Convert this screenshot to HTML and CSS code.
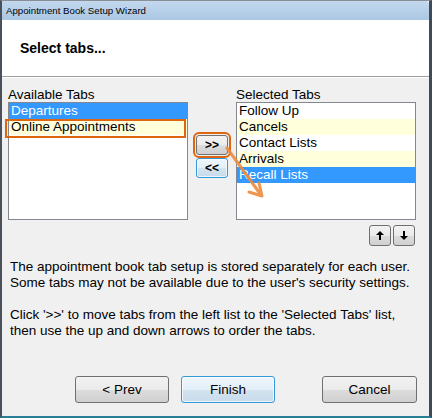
FILE: index.html
```html
<!DOCTYPE html>
<html>
<head>
<meta charset="utf-8">
<link rel="stylesheet" href="styles.css">
</head>
<body>
<div class="window">
  <div class="titlebar">Appointment Book Setup Wizard</div>
  <div class="header"><span class="heading">Select tabs...</span></div>
  <div class="body">
    <div class="lists">
      <div class="col">
        <div class="label">Available Tabs</div>
        <div class="listbox">
          <div class="item selected">Departures</div>
          <div class="item alt marked">Online Appointments</div>
        </div>
      </div>
      <div class="movebtns">
        <button class="btn small marked-btn">&gt;&gt;</button>
        <button class="btn small default">&lt;&lt;</button>
      </div>
      <div class="col">
        <div class="label">Selected Tabs</div>
        <div class="listbox">
          <div class="item">Follow Up</div>
          <div class="item alt">Cancels</div>
          <div class="item">Contact Lists</div>
          <div class="item alt">Arrivals</div>
          <div class="item selected">Recall Lists</div>
        </div>
        <div class="orderbtns">
          <button class="btn arrow"><svg width="8" height="9" viewBox="0 0 8 9"><path d="M4 0 L8 4 L5 4 L5 9 L3 9 L3 4 L0 4 Z" fill="#000"/></svg></button>
          <button class="btn arrow"><svg width="8" height="9" viewBox="0 0 8 9"><path d="M4 9 L8 5 L5 5 L5 0 L3 0 L3 5 L0 5 Z" fill="#000"/></svg></button>
        </div>
      </div>
    </div>
    <div class="info">
      <p>The appointment book tab setup is stored separately for each user.<br>Some tabs may not be available due to the user's security settings.</p>
      <p>Click '&gt;&gt;' to move tabs from the left list to the 'Selected Tabs' list,<br>then use the up and down arrows to order the tabs.</p>
    </div>
    <div class="footer">
      <button class="btn big">&lt; Prev</button>
      <button class="btn big default">Finish</button>
      <button class="btn big cancel">Cancel</button>
    </div>
  </div>
  <svg class="annot-arrow" width="432" height="418" viewBox="0 0 432 418">
    <g stroke="#ef8a3e" stroke-width="3" stroke-linecap="round" stroke-linejoin="round" fill="none" opacity="0.9">
      <path d="M227 148 L261 195"/>
      <path d="M249 192 L262 196 L259 183"/>
    </g>
  </svg>
</div>
</body>
</html>
```
FILE: styles.css
```css
* { box-sizing: border-box; }
html, body { margin: 0; padding: 0; background: #ffffff; }
body { font-family: "Liberation Sans", Arial, sans-serif; }

.window {
  position: relative;
  width: 432px;
  height: 418px;
  border-top: 1px solid #8a8f96;
  border-left: 2px solid #4b5158;
  border-right: 3px solid #3f4c57;
  border-bottom: 2px solid #2a7f98;
  display: flex;
  flex-direction: column;
  background: #f0f0f0;
  overflow: hidden;
}

.titlebar {
  height: 19px;
  background: linear-gradient(#c3d8ee, #abc7e4);
  font-size: 9.7px;
  line-height: 19px;
  padding-left: 4px;
  color: #000;
  border-top-right-radius: 4px;
}

.header {
  height: 57px;
  background: #ffffff;
  border-bottom: 1px solid #a0a0a0;
  box-shadow: 0 1px 0 #ffffff;
  display: flex;
  align-items: center;
  padding-left: 18px;
  padding-bottom: 1px;
}
.heading {
  font-weight: bold;
  font-size: 14px;
  color: #000;
}

.body {
  flex: 1;
  display: flex;
  flex-direction: column;
  padding: 11px 12px 0 6px;
}

.lists {
  display: flex;
  align-items: flex-start;
  gap: 8px;
}
.col { display: flex; flex-direction: column; width: 180px; }
.label {
  font-size: 13.5px;
  line-height: 14px;
  height: 14px;
  color: #000;
}
.listbox {
  height: 118px;
  background: #fff;
  border: 1px solid #828790;
  display: flex;
  flex-direction: column;
}
.item {
  height: 16px;
  line-height: 16px;
  font-size: 13.5px;
  padding-left: 2px;
  color: #000;
  white-space: nowrap;
  position: relative;
}
.item.alt { background: #ffffdc; }
.item.selected { background: #3399ff; color: #fff; }
.item.marked::after {
  content: "";
  box-sizing: border-box;
  position: absolute;
  left: -4px;
  top: 0;
  width: 181px;
  height: 19px;
  border: 2px solid #e0650f;
}

.movebtns {
  width: 32px;
  display: flex;
  flex-direction: column;
  gap: 3px;
  padding-top: 47px;
}

.btn {
  font-family: "Liberation Sans", Arial, sans-serif;
  font-size: 13.5px;
  color: #000;
  border: 1px solid #707070;
  border-radius: 3px;
  background: linear-gradient(#f2f2f2 0%, #ebebeb 50%, #dddddd 51%, #cfcfcf 100%);
  padding: 0;
  margin: 0;
  display: flex;
  align-items: center;
  justify-content: center;
}
.btn.default {
  border-color: #3399dd;
  background: linear-gradient(#eef5fb 0%, #e3eef7 50%, #d3e3f0 51%, #c8dbeb 100%);
  box-shadow: inset 0 0 0 1px rgba(255,255,255,0.7);
}
.btn.small { width: 32px; height: 20px; font-size: 12px; font-weight: bold; }
.btn.marked-btn { outline: 2px solid #e0650f; outline-offset: 1px; }

.orderbtns {
  display: flex;
  justify-content: flex-end;
  gap: 2px;
  margin-top: 5px;
  padding-right: 1px;
}
.btn.arrow { width: 22px; height: 21px; }

.info {
  margin-top: 13px;
  padding-left: 2px;
  font-size: 13.5px;
  line-height: 16px;
  color: #000;
}
.info p { margin: 0 0 16px 0; }

.footer {
  margin-top: auto;
  margin-bottom: 13px;
  display: flex;
  justify-content: flex-end;
  gap: 12px;
}
.btn.big { width: 94px; height: 27px; }
.btn.cancel { margin-left: 35px; width: 95px; }

.annot-arrow {
  position: absolute;
  left: -2px;
  top: -1px;
  pointer-events: none;
}
```
